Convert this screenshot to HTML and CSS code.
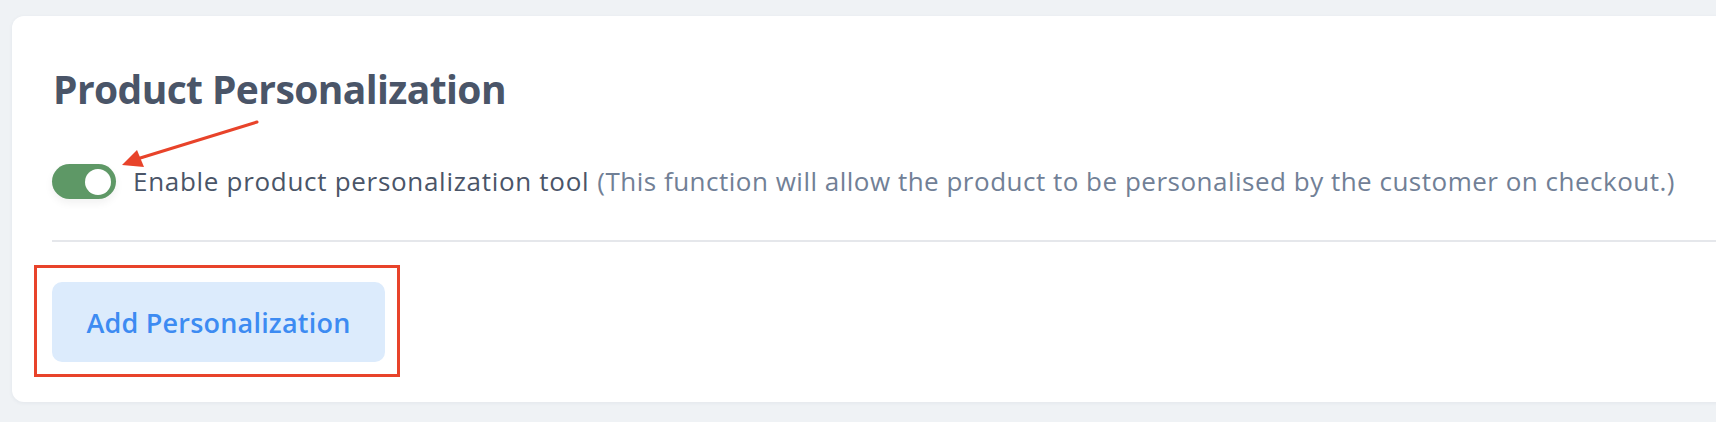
FILE: index.html
```html
<!DOCTYPE html>
<html lang="en">
<head>
<meta charset="utf-8">
<title>Product Personalization</title>
<link rel="stylesheet" href="styles.css">
</head>
<body>
<div class="page">
  <section class="card">
    <h2 class="title">Product Personalization</h2>
    <div class="toggle-row">
      <span class="toggle" role="switch" aria-checked="true"><span class="knob"></span></span>
      <span class="label">Enable product personalization tool</span>
      <span class="hint">(This function will allow the product to be personalised by the customer on checkout.)</span>
    </div>
    <hr class="divider">
    <div class="actions">
      <button class="btn-add" type="button">Add Personalization</button>
      <span class="highlight-box"></span>
    </div>
    <svg class="arrow" width="150" height="60" viewBox="0 0 150 60" aria-hidden="true">
      <line x1="145" y1="2" x2="25" y2="39" stroke="#e8432a" stroke-width="3" stroke-linecap="round"/>
      <polygon points="10,45 25,30 32,47" fill="#e8432a"/>
    </svg>
  </section>
</div>
</body>
</html>
```

FILE: styles.css
```css
html, body {
  margin: 0;
  padding: 0;
  background: #eff2f5;
  overflow: hidden;
}

body {
  font-family: "Open Sans", "Noto Sans", sans-serif;
}

.page {
  padding: 16px 0 0 12px;
  height: 422px;
  box-sizing: border-box;
  overflow: hidden;
}

.card {
  position: relative;
  background: #ffffff;
  border-radius: 12px;
  margin-right: -40px;
  height: 386px;
  box-sizing: border-box;
  padding: 48px 0 0 41px;
  box-shadow: 0 1px 4px rgba(30, 50, 80, 0.06);
}

.title {
  margin: 0;
  font-size: 39px;
  line-height: 50px;
  font-weight: 700;
  color: #4a5568;
  letter-spacing: -0.6px;
}

.toggle-row {
  display: flex;
  align-items: center;
  margin-top: 50px;
  font-size: 26px;
  line-height: 35px;
  letter-spacing: 0.5px;
}

.toggle {
  display: flex;
  align-items: center;
  justify-content: flex-end;
  width: 64px;
  height: 35px;
  border-radius: 18px;
  background: #5e9866;
  padding: 0 5px;
  box-sizing: border-box;
  box-shadow: 0 4px 8px rgba(0, 0, 0, 0.06);
  flex-shrink: 0;
  margin-left: -1px;
}

.knob {
  width: 26px;
  height: 26px;
  border-radius: 50%;
  background: #ffffff;
}

.label {
  margin-left: 17px;
  color: #4a5568;
  letter-spacing: 0.7px;
}

.hint {
  margin-left: 8px;
  color: #718096;
}

.divider {
  border: 0;
  height: 2px;
  background: #e5e7eb;
  margin: 41px 0 0 -1px;
}

.actions {
  position: relative;
  margin-top: 40px;
  margin-left: -1px;
  width: 333px;
}

.btn-add {
  display: block;
  width: 333px;
  height: 80px;
  border: 0;
  border-radius: 10px;
  background: #dcebfc;
  color: #3d8bf2;
  font-family: "Open Sans", "Noto Sans", sans-serif;
  font-size: 27px;
  font-weight: 600;
  letter-spacing: 0.2px;
  padding: 0;
  cursor: pointer;
}

.highlight-box {
  position: absolute;
  left: -18px;
  top: -17px;
  right: -15px;
  bottom: -15px;
  border: 3.5px solid #e8432a;
  pointer-events: none;
}

.arrow {
  position: absolute;
  left: 100px;
  top: 104px;
  overflow: visible;
}
```
